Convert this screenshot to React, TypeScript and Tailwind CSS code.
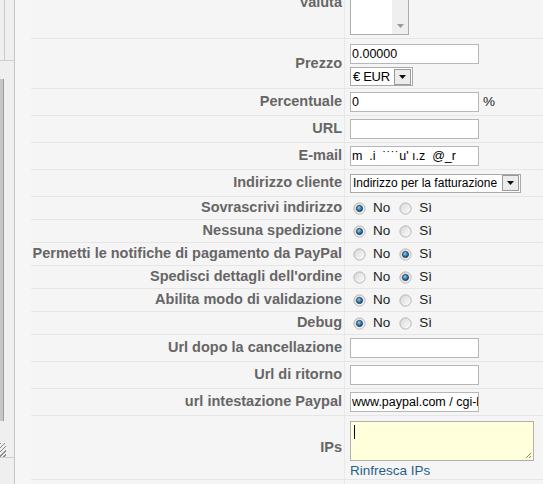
import React from 'react';

const Radio = ({ checked }: { checked: boolean }) => (
  <svg width="13" height="13" viewBox="0 0 13 13" className="shrink-0">
    <defs>
      <linearGradient id="radioFill" x1="0" y1="0" x2="1" y2="1">
        <stop offset="0" stopColor="#d6d6d6" />
        <stop offset="1" stopColor="#ffffff" />
      </linearGradient>
      <radialGradient id="radioDot" cx="0.4" cy="0.35" r="0.7">
        <stop offset="0" stopColor="#8fd0f5" />
        <stop offset="0.6" stopColor="#2577b0" />
        <stop offset="1" stopColor="#174a72" />
      </radialGradient>
    </defs>
    <circle cx="6.5" cy="6.5" r="5.6" fill="url(#radioFill)" stroke="#b4b4b4" strokeWidth="1" />
    {checked && <circle cx="6.5" cy="6.5" r="3.1" fill="url(#radioDot)" stroke="#23313d" strokeWidth="0.8" />}
  </svg>
);

const YesNo = ({ yes }: { yes: boolean }) => (
  <div className="flex items-center text-[13.5px] text-[#222] pl-[3px]">
    <Radio checked={!yes} />
    <span className="ml-[7px]">No</span>
    <span className="ml-[9px]"><Radio checked={yes} /></span>
    <span className="ml-[7px]">Sì</span>
  </div>
);

const TextBox = ({ value = '', w = 'w-[129px]' }: { value?: string; w?: string }) => (
  <input
    readOnly
    value={value}
    className={`${w} h-[20px] border border-[#b7b7b7] bg-white text-[12.5px] text-black pl-[1px] outline-none whitespace-pre`}
  />
);

const DropButton = () => (
  <div className="w-[17px] h-[16px] shrink-0 border border-[#9a9a9a] bg-[#ececec] flex items-center justify-center">
    <svg width="7" height="4" viewBox="0 0 7 4">
      <path d="M0 0 L7 0 L3.5 4 Z" fill="#111" />
    </svg>
  </div>
);

const Select = ({ text, w, size }: { text: string; w: string; size: string }) => (
  <div className={`${w} h-[19px] border border-[#a9a9a9] bg-white flex items-center justify-between pl-[2px] pr-[1px] ${size} text-black`}>
    <span className="whitespace-nowrap">{text}</span>
    <DropButton />
  </div>
);

const Row = ({ label, h, top, children }: { label: string; h: string; top?: boolean; children?: React.ReactNode }) => (
  <div className={`flex border-b border-[#e6e6e6] ${h}`}>
    <div className="w-[314px] shrink-0 border-r border-[#e9e9e9] flex items-center justify-end pr-[2px] text-[14.5px] font-bold text-[#666] whitespace-nowrap">
      {label}
    </div>
    <div className={`flex-1 pl-[5px] flex flex-col ${top ? 'justify-start pt-[5px]' : 'justify-center'}`}>{children}</div>
  </div>
);

export default function App() {
  return (
    <div className="w-[543px] h-[484px] overflow-hidden flex bg-[#f5f5f5] font-['Liberation_Sans',Arial,sans-serif]">
      {/* cut-off neighbour column */}
      <div className="w-[15px] shrink-0 h-full border-r border-[#c4c4c4] bg-[#efefef] flex flex-col">
        <div className="h-[61px] flex border-b border-[#cfcfcf]">
          <div className="w-[5px] border-r border-[#c9c9c9]" />
        </div>
        <div className="h-[18px]" />
        <div className="h-[342px] w-[4px] bg-[#c6c6c6] border-r border-[#9c9c9c]" />
        <div className="h-[22px]" />
        <div className="h-[14px] w-[6px] bg-[repeating-linear-gradient(135deg,#8a8a8a_0_1px,#efefef_1px_3px)]" />
        <div className="border-b border-[#cfcfcf]" />
      </div>
      <div className="w-[16px] shrink-0 bg-[#f6f6f6]" />
      <div className="flex-1 flex flex-col mt-[-32px]">
        <Row label="Valuta" h="h-[71px]">
          <div className="w-[59px] h-[64px] border border-[#acacac] bg-white flex justify-end">
            <div className="w-[16px] h-full bg-[#efefef] flex flex-col justify-end items-center pb-[6px]">
              <svg width="7" height="4" viewBox="0 0 7 4">
                <path d="M0 0 L7 0 L3.5 4 Z" fill="#9a9a9a" />
              </svg>
            </div>
          </div>
        </Row>
        <Row label="Prezzo" h="h-[50px]" top>
          <TextBox value="0.00000" />
          <div className="mt-[3px]">
            <Select text="€ EUR" w="w-[63px]" size="text-[13px] tracking-[-0.3px]" />
          </div>
        </Row>
        <Row label="Percentuale" h="h-[27px]">
          <div className="flex items-center">
            <TextBox value="0" />
            <span className="ml-[4px] text-[13.5px] text-[#222]">%</span>
          </div>
        </Row>
        <Row label="URL" h="h-[27px]">
          <TextBox />
        </Row>
        <Row label="E-mail" h="h-[27px]">
          <TextBox value="m  .i  ˙˙˙˙u' ı.z  @_r" />
        </Row>
        <Row label="Indirizzo cliente" h="h-[27px]">
          <Select text="Indirizzo per la fatturazione" w="w-[171px]" size="text-[12px]" />
        </Row>
        <Row label="Sovrascrivi indirizzo" h="h-[23px]">
          <YesNo yes={false} />
        </Row>
        <Row label="Nessuna spedizione" h="h-[23px]">
          <YesNo yes={false} />
        </Row>
        <Row label="Permetti le notifiche di pagamento da PayPal" h="h-[23px]">
          <YesNo yes={true} />
        </Row>
        <Row label="Spedisci dettagli dell'ordine" h="h-[23px]">
          <YesNo yes={true} />
        </Row>
        <Row label="Abilita modo di validazione" h="h-[23px]">
          <YesNo yes={false} />
        </Row>
        <Row label="Debug" h="h-[23px]">
          <YesNo yes={false} />
        </Row>
        <Row label="Url dopo la cancellazione" h="h-[27px]">
          <TextBox />
        </Row>
        <Row label="Url di ritorno" h="h-[27px]">
          <TextBox />
        </Row>
        <Row label="url intestazione Paypal" h="h-[27px]">
          <TextBox value="www.paypal.com / cgi-bin" />
        </Row>
        <Row label="IPs" h="h-[64px]" top>
          <div className="w-[184px] h-[40px] border border-[#b0b0b0] bg-[#ffffdc] flex flex-col justify-between">
            <div className="ml-[3px] mt-[3px] w-[1px] h-[14px] bg-black" />
            <div className="flex justify-end pr-[1px] pb-[1px]">
              <svg width="8" height="8" viewBox="0 0 8 8">
                <path d="M7 2 L2 7 M7 5 L5 7" stroke="#8a8a8a" strokeWidth="1" />
              </svg>
            </div>
          </div>
          <span className="mt-[2px] text-[13.5px] text-[#1f5f8e] leading-[15px]">Rinfresca IPs</span>
        </Row>
        <div className="flex-1 flex">
          <div className="w-[314px] border-r border-[#e9e9e9]" />
        </div>
      </div>
    </div>
  );
}
